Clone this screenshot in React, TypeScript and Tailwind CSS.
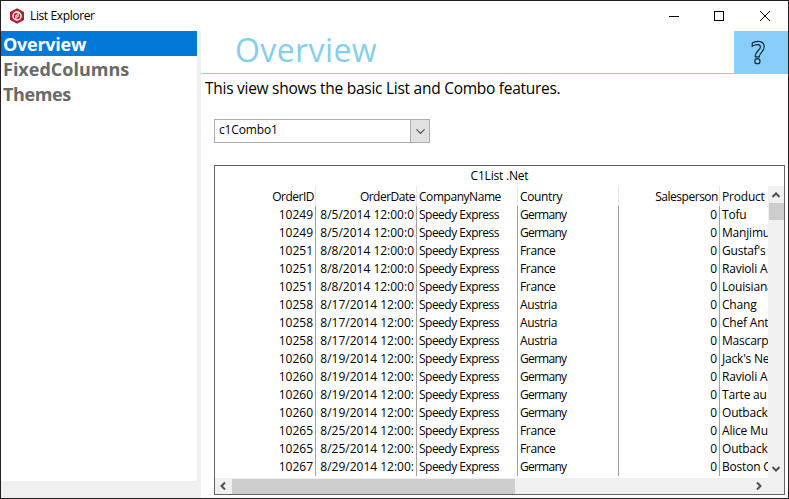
import { ChevronDown } from "lucide-react";

type Row = [string, string, string, string];

const rows: Row[] = [
  ["10249", "8/5/2014 12:00:0", "Germany", "Tofu"],
  ["10249", "8/5/2014 12:00:0", "Germany", "Manjimu"],
  ["10251", "8/8/2014 12:00:0", "France", "Gustaf's"],
  ["10251", "8/8/2014 12:00:0", "France", "Ravioli A"],
  ["10251", "8/8/2014 12:00:0", "France", "Louisiana"],
  ["10258", "8/17/2014 12:00:", "Austria", "Chang"],
  ["10258", "8/17/2014 12:00:", "Austria", "Chef Ant"],
  ["10258", "8/17/2014 12:00:", "Austria", "Mascarp"],
  ["10260", "8/19/2014 12:00:", "Germany", "Jack's Ne"],
  ["10260", "8/19/2014 12:00:", "Germany", "Ravioli A"],
  ["10260", "8/19/2014 12:00:", "Germany", "Tarte au"],
  ["10260", "8/19/2014 12:00:", "Germany", "Outback"],
  ["10265", "8/25/2014 12:00:", "France", "Alice Mu"],
  ["10265", "8/25/2014 12:00:", "France", "Outback"],
  ["10267", "8/29/2014 12:00:", "Germany", "Boston C"],
];

const cols = "grid grid-cols-[101px_101px_101px_101px_101px_48px]";
const right = "border-r text-right overflow-hidden whitespace-nowrap";
const left = "border-r pl-[2px] overflow-hidden whitespace-nowrap";

function Arrow({ className }: { className: string }) {
  return (
    <svg viewBox="0 0 10 10" className={"h-[10px] w-[10px] " + className}>
      <path d="M1.5 7 L5 3.5 L8.5 7" fill="none" stroke="#505050" strokeWidth="2" />
    </svg>
  );
}

function TitleBar() {
  return (
    <div className="flex h-[30px] shrink-0 items-center bg-white">
      <svg viewBox="0 0 16 16" className="mb-px ml-2 h-4 w-4">
        <path d="M8 .2 L15 4 V12 L8 15.8 L1 12 V4 Z" fill="#a4262f" />
        <circle cx="8" cy="8" r="4" fill="#a4262f" stroke="#fff" strokeWidth="1.4" />
        <path d="M9.8 4.6 L9.6 8.4 L6.2 11.4 L6.4 7.6 Z" fill="#fff" />
        <path d="M8.8 6.8 L7.2 9.4" stroke="#a4262f" strokeWidth=".8" />
      </svg>
      <span className="ml-[5px] text-[12px] tracking-[-0.38px]">List Explorer</span>
      <svg viewBox="0 0 102 12" className="mr-[17px] ml-auto h-3 w-[102px]" fill="none" stroke="#000">
        <path d="M0 6.5 H10" />
        <rect x="45.5" y="1.5" width="9" height="9" />
        <path d="M91 1 L101 11 M101 1 L91 11" />
      </svg>
    </div>
  );
}

function ListGrid() {
  return (
    <div className="mt-[22px] ml-[13px] flex h-[330px] w-[571px] flex-col border border-[#646464] text-[12px]">
      <div className="h-5 shrink-0 text-center leading-[20px] tracking-[-0.2px]">C1List .Net</div>
      <div className="flex h-[292px]">
        <div className="w-[553px]">
          <div className={cols + " h-5 leading-[21px] [&>div]:border-[#e4e4e4]"}>
            <div className={right + " pr-px tracking-[-0.5px]"}>OrderID</div>
            <div className={right + " pr-px tracking-[-0.5px]"}>OrderDate</div>
            <div className={left + " tracking-[-0.45px]"}>CompanyName</div>
            <div className={left + " tracking-[-0.35px]"}>Country</div>
            <div className={right + " pr-px tracking-[-0.48px]"}>Salesperson</div>
            <div className="overflow-hidden pl-[2px] tracking-[-0.2px]">Product</div>
          </div>
          <div className="h-[271px]">
            {rows.map(([id, date, country, product], i) => (
              <div key={i} className={cols + " h-[18px] leading-[18px] [&>div]:border-[#a0a0a0]"}>
                <div className={right + " pr-[2px]"}>{id}</div>
                <div className={right + " pr-[2px]"}>{date}</div>
                <div className={left + " tracking-[-0.52px]"}>Speedy Express</div>
                <div className={left + (country === "Germany" ? " tracking-[-0.75px]" : " tracking-[-0.35px]")}>{country}</div>
                <div className={right + " pr-[2px]"}>0</div>
                <div className="overflow-hidden pl-[2px] tracking-[-0.2px] whitespace-nowrap">{product}</div>
              </div>
            ))}
          </div>
        </div>
        <div className="flex w-4 flex-col items-center bg-[#f0f0f0]">
          <Arrow className="mt-1 mb-[3px]" />
          <div className="h-[17px] w-[15px] bg-[#cdcdcd]" />
          <Arrow className="mt-auto mb-1 rotate-180" />
        </div>
      </div>
      <div className="flex h-4 items-center bg-[#f0f0f0]">
        <Arrow className="mr-[4px] ml-[3px] -rotate-90" />
        <div className="h-[15px] w-[283px] bg-[#cdcdcd]" />
        <Arrow className="mr-[20px] ml-auto rotate-90" />
      </div>
    </div>
  );
}

export default function App() {
  return (
    <div className="flex h-[499px] w-[789px] flex-col overflow-hidden border border-[#231f20] bg-white font-['Open_Sans','Noto_Sans',sans-serif] text-black">
      <TitleBar />
      <div className="flex h-[467px]">
        <nav className="h-full w-[200px] shrink-0 bg-[#f0f0f0]">
          <div className="h-[450px] w-[196px] bg-white text-[18px] leading-[27px] font-bold text-[#696969]">
            <div className="h-[25px] bg-[#0078d7] pl-[2px] tracking-[-0.25px] text-white">Overview</div>
            <div className="h-[25px] pl-[2px]">FixedColumns</div>
            <div className="h-[25px] pl-[2px] tracking-[-0.4px]">Themes</div>
          </div>
        </nav>
        <main className="w-[587px]">
          <header className="flex h-[43px] border-b border-[#87ceeb]">
            <h1 className="flex-1 pl-[34px] text-[32px] leading-[38px] tracking-[0.4px] text-[#87ceeb]">Overview</h1>
            <div className="flex h-[43px] w-[54px] items-center justify-center bg-[#87cefa]">
              <svg viewBox="0 0 16 26" className="mr-[7px] h-[25px] w-4" fill="none" stroke="#172635" strokeWidth="1.2">
                <path d="M2 6.5 V3.2 Q4.5 1.5 8 1.5 C12 1.5 14.4 3.5 14.4 7 C14.4 12.5 9.4 12.5 9.4 17.5 H5.2 C5.2 10.5 10.5 11 10.5 7.4 C10.5 4.2 6 4.2 2 6.5 Z" />
                <circle cx="7.4" cy="22" r="2.7" />
              </svg>
            </div>
          </header>
          <p className="h-[45px] pl-1 text-[15.5px] leading-[28px] tracking-[-0.27px]">This view shows the basic List and Combo features.</p>
          <div className="ml-[13px] flex h-6 w-[216px] border border-[#acacac] text-[12px]">
            <span className="flex-1 pl-1 leading-[20px] tracking-[-0.15px]">c1Combo1</span>
            <span className="flex w-[19px] items-center justify-center border-l border-[#acacac] bg-[#e1e1e1]">
              <ChevronDown size={15} color="#444" strokeWidth={1.8} />
            </span>
          </div>
          <ListGrid />
        </main>
      </div>
    </div>
  );
}
